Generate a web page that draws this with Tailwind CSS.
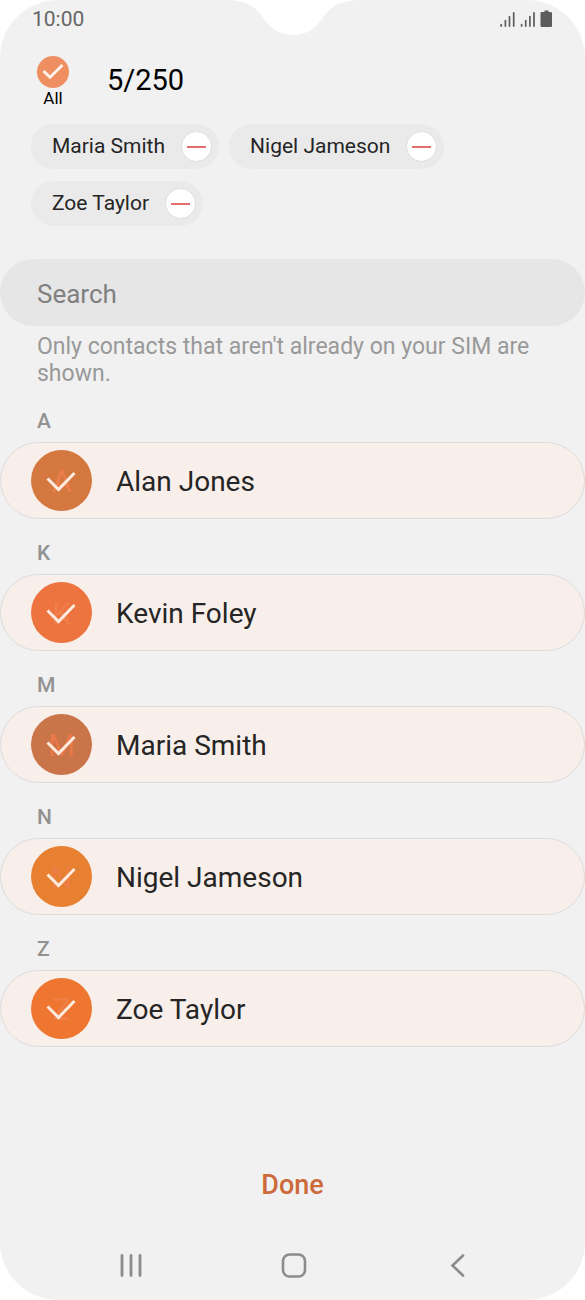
<!DOCTYPE html>
<html lang="en">
<head>
<meta charset="utf-8">
<meta name="viewport" content="width=device-width, initial-scale=1">
<title>Select contacts</title>
<script src="https://cdn.jsdelivr.net/npm/@tailwindcss/browser@4"></script>
</head>
<body class="bg-white font-[Roboto,sans-serif] text-[#252525]">
<div class="relative flex min-h-screen flex-col rounded-[58px] bg-[#f1f1f1]">
  <!-- Camera notch -->
  <svg class="absolute top-0 left-1/2 -translate-x-1/2" width="136" height="35" viewBox="0 0 136 35" fill="#fff" aria-hidden="true"><path d="M0 0C18 0 29 5 37 16C44 27 53 35 68 35S92 27 99 16C107 5 118 0 136 0Z"/></svg>

  <header class="flex h-[38px] items-center justify-between pr-[31px] pl-8 text-[#666]">
    <span class="text-[21px] leading-[38px]">10:00</span>
    <span class="flex items-center">
      <svg width="54" height="18" viewBox="0 0 54 18" aria-hidden="true"><g fill="none" stroke="#5c5c5c" stroke-width="1.7" stroke-linecap="round"><path d="M1.2 14.5v1.6M5.4 10.6v5.5M9.5 6.7v9.4M13.7 2.9v13.2M21.6 14.5v1.6M25.7 10.6v5.5M29.9 6.7v9.4M34 2.9v13.2"/></g><path fill="#5c5c5c" d="M44.500 0.500h4v1.600h2.200q1.300 0 1.300 1.300v12.500q0 1-1 1h-9.500q-1 0-1-1v-12.500q0-1.300 1.300-1.300h2.700z"/></svg>
    </span>
  </header>

  <main>
    <div class="flex items-center gap-[38px] pt-[18px] pl-[37px] text-black">
      <label class="flex flex-col items-center text-[17px] leading-[20px]">
        <span class="grid place-items-center">
          <input type="checkbox" checked class="col-start-1 row-start-1 size-8 appearance-none rounded-full bg-[#ef8e60]">
          <svg class="pointer-events-none col-start-1 row-start-1" width="32" height="32" viewBox="0 0 32 32" fill="none" stroke="#fff3ec" stroke-width="2.800" aria-hidden="true"><path d="M6.500 15L13 21.300L25.500 9"/></svg>
        </span>
        All
      </label>
      <h1 class="pb-1 text-[29px] leading-[34px]">5/250</h1>
    </div>

    <ul class="flex flex-wrap gap-x-[10px] gap-y-3 px-[31px] pt-4 text-[21px]">
      <li class="flex h-[45px] items-center gap-4 rounded-full bg-[#eaeaea] pr-[7px] pl-[21px]">Maria Smith
        <button aria-label="Remove Maria Smith" class="grid size-[31px] place-items-center rounded-full border border-[#dedede] bg-white"><span class="h-[2px] w-[19px] bg-[#e26d6d]"></span></button>
      </li>
      <li class="flex h-[45px] items-center gap-4 rounded-full bg-[#eaeaea] pr-[7px] pl-[21px]">Nigel Jameson
        <button aria-label="Remove Nigel Jameson" class="grid size-[31px] place-items-center rounded-full border border-[#dedede] bg-white"><span class="h-[2px] w-[19px] bg-[#e26d6d]"></span></button>
      </li>
      <li class="flex h-[45px] items-center gap-4 rounded-full bg-[#eaeaea] pr-[7px] pl-[21px]">Zoe Taylor
        <button aria-label="Remove Zoe Taylor" class="grid size-[31px] place-items-center rounded-full border border-[#dedede] bg-white"><span class="h-[2px] w-[19px] bg-[#e26d6d]"></span></button>
      </li>
    </ul>

    <input type="search" placeholder="Search" aria-label="Search" class="mt-[33px] block h-[67px] w-full rounded-full bg-[#e6e6e6] px-[37px] pt-[2px] text-[26px] placeholder:text-[#808080]">
    <p class="px-[37px] pt-[7px] text-[23px] leading-[27px] text-[#999]">Only contacts that aren't already on your SIM are shown.</p>

    <section>
      <h2 class="h-[55px] pl-[37px] text-[21px] leading-[68px] font-medium text-[#929292]">A</h2>
      <label class="flex h-[77px] items-center gap-6 rounded-full border border-[#dcdcdc] bg-[#f9efea] pl-[30px] text-[28px]">
        <span class="grid place-items-center">
          <input type="checkbox" checked class="col-start-1 row-start-1 size-[61px] appearance-none rounded-full bg-[#d4783f]">
          <span aria-hidden="true" class="col-start-1 row-start-1 pt-1 text-[31px] text-[#ed7e4b]">A</span>
          <svg class="pointer-events-none col-start-1 row-start-1" width="61" height="61" viewBox="0 0 61 61" fill="none" stroke="#fdebdf" stroke-width="3" aria-hidden="true"><path d="M16.500 28.500L27.500 39.500L43.500 23"/></svg>
        </span><span class="pt-[2px]">Alan Jones</span>
      </label>
    </section>
    <section>
      <h2 class="h-[55px] pl-[37px] text-[21px] leading-[68px] font-medium text-[#929292]">K</h2>
      <label class="flex h-[77px] items-center gap-6 rounded-full border border-[#dcdcdc] bg-[#f9efea] pl-[30px] text-[28px]">
        <span class="grid place-items-center">
          <input type="checkbox" checked class="col-start-1 row-start-1 size-[61px] appearance-none rounded-full bg-[#ed743f]">
          <span aria-hidden="true" class="col-start-1 row-start-1 pt-1 text-[31px] text-[#ef7e4b]">K</span>
          <svg class="pointer-events-none col-start-1 row-start-1" width="61" height="61" viewBox="0 0 61 61" fill="none" stroke="#fdebdf" stroke-width="3" aria-hidden="true"><path d="M16.500 28.500L27.500 39.500L43.500 23"/></svg>
        </span><span class="pt-[2px]">Kevin Foley</span>
      </label>
    </section>
    <section>
      <h2 class="h-[55px] pl-[37px] text-[21px] leading-[68px] font-medium text-[#929292]">M</h2>
      <label class="flex h-[77px] items-center gap-6 rounded-full border border-[#dcdcdc] bg-[#f9efea] pl-[30px] text-[28px]">
        <span class="grid place-items-center">
          <input type="checkbox" checked class="col-start-1 row-start-1 size-[61px] appearance-none rounded-full bg-[#ca744a]">
          <span aria-hidden="true" class="col-start-1 row-start-1 pt-1 text-[31px] text-[#e87848]">M</span>
          <svg class="pointer-events-none col-start-1 row-start-1" width="61" height="61" viewBox="0 0 61 61" fill="none" stroke="#fdebdf" stroke-width="3" aria-hidden="true"><path d="M16.500 28.500L27.500 39.500L43.500 23"/></svg>
        </span><span class="pt-[2px]">Maria Smith</span>
      </label>
    </section>
    <section>
      <h2 class="h-[55px] pl-[37px] text-[21px] leading-[68px] font-medium text-[#929292]">N</h2>
      <label class="flex h-[77px] items-center gap-6 rounded-full border border-[#dcdcdc] bg-[#f9efea] pl-[30px] text-[28px]">
        <span class="grid place-items-center">
          <input type="checkbox" checked class="col-start-1 row-start-1 size-[61px] appearance-none rounded-full bg-[#e78030]">
          <span aria-hidden="true" class="col-start-1 row-start-1 pt-1 text-[31px] text-[#ee7d45]">N</span>
          <svg class="pointer-events-none col-start-1 row-start-1" width="61" height="61" viewBox="0 0 61 61" fill="none" stroke="#fdebdf" stroke-width="3" aria-hidden="true"><path d="M16.500 28.500L27.500 39.500L43.500 23"/></svg>
        </span><span class="pt-[2px]">Nigel Jameson</span>
      </label>
    </section>
    <section>
      <h2 class="h-[55px] pl-[37px] text-[21px] leading-[68px] font-medium text-[#929292]">Z</h2>
      <label class="flex h-[77px] items-center gap-6 rounded-full border border-[#dcdcdc] bg-[#f9efea] pl-[30px] text-[28px]">
        <span class="grid place-items-center">
          <input type="checkbox" checked class="col-start-1 row-start-1 size-[61px] appearance-none rounded-full bg-[#ee7631]">
          <span aria-hidden="true" class="col-start-1 row-start-1 pt-1 text-[31px] text-[#ef7f45]">Z</span>
          <svg class="pointer-events-none col-start-1 row-start-1" width="61" height="61" viewBox="0 0 61 61" fill="none" stroke="#fdebdf" stroke-width="3" aria-hidden="true"><path d="M16.500 28.500L27.500 39.500L43.500 23"/></svg>
        </span><span class="pt-[2px]">Zoe Taylor</span>
      </label>
    </section>
  </main>

  <footer class="mt-auto flex flex-col items-center pb-[17px]">
    <button class="px-6 text-[27px] leading-[40px] font-medium text-[#cc6a3a]">Done</button>
    <nav aria-label="System" class="grid w-full grid-cols-3 justify-items-center pr-[47px] pl-[49px] pt-[42px]">
      <button aria-label="Recent apps"><svg width="36" height="36" viewBox="0 0 36 36" fill="none" stroke="#8c8c8c" stroke-width="2.800" stroke-linecap="round" aria-hidden="true"><path d="M9 8.500v20M18 8.500v20M27 8.500v20"/></svg></button>
      <button aria-label="Home"><svg width="36" height="36" viewBox="0 0 36 36" fill="none" stroke="#8c8c8c" stroke-width="2.600" aria-hidden="true"><rect x="7" y="7.500" width="22" height="22" rx="6.500"/></svg></button>
      <button aria-label="Back"><svg width="36" height="36" viewBox="0 0 36 36" fill="none" stroke="#8c8c8c" stroke-width="2.600" stroke-linecap="round" aria-hidden="true"><path d="M24 8.500L13.500 18.500L24 28.500"/></svg></button>
    </nav>
  </footer>
</div>
</body>
</html>
